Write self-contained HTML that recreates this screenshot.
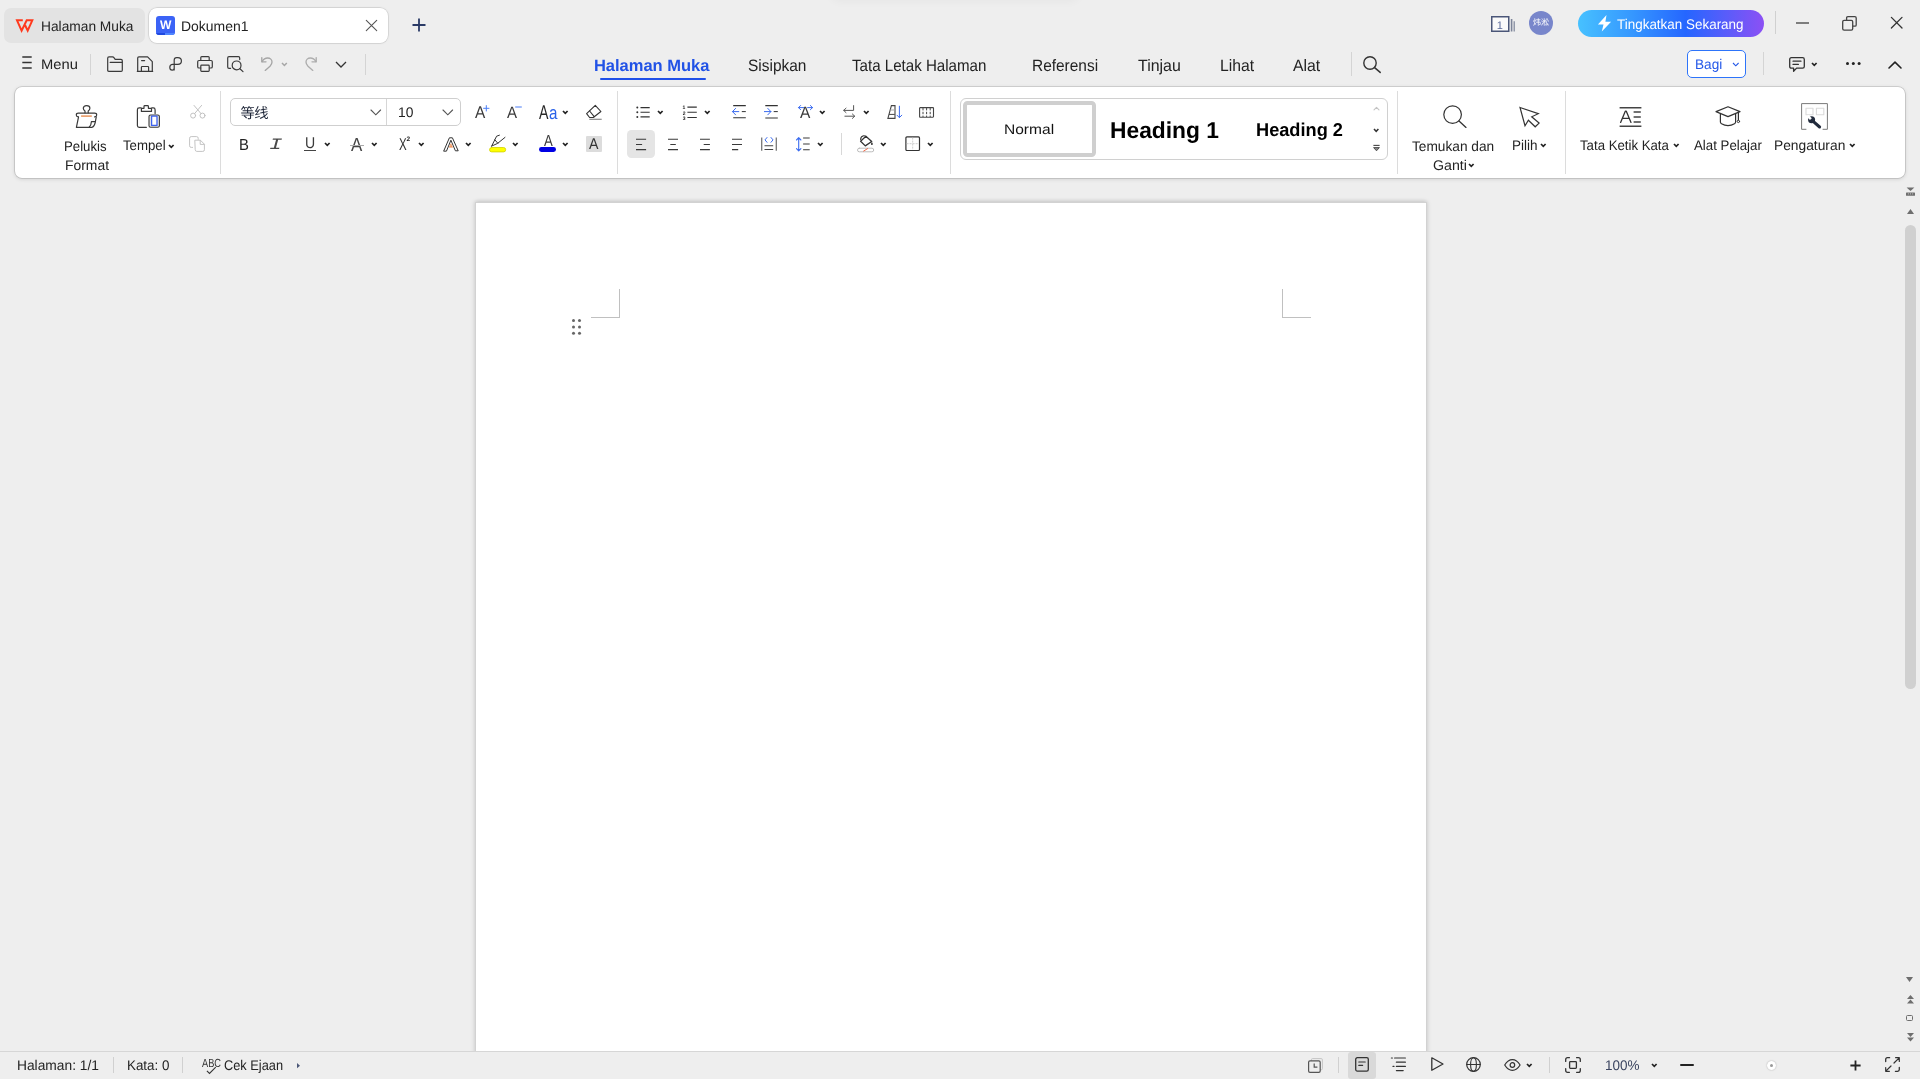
<!DOCTYPE html>
<html lang="id"><head><meta charset="utf-8"><title>Dokumen1 - WPS Writer</title>
<style>
*{box-sizing:border-box}
html,body{margin:0;padding:0}
body{text-rendering:geometricPrecision;width:1920px;height:1079px;background:#eeeeee;position:relative;overflow:hidden;font-family:"Liberation Sans","Noto Sans CJK SC",sans-serif;color:#222}
.a{position:absolute}
.t{position:absolute;white-space:nowrap;line-height:1}
svg{overflow:visible}
</style></head><body><div id="root" style="position:absolute;left:0;top:0;width:1920px;height:1079px;will-change:transform">
<div class="a" style="left:832px;top:-16px;width:246px;height:16px;border-radius:8px;box-shadow:0 0 8px 2px rgba(0,0,0,.035)"></div>
<div class="a" style="left:4px;top:8px;width:140.5px;height:34.6px;background:#e3e3e3;border-radius:7px;"></div>
<svg class="a" style="left:15px;top:19px;" width="19" height="14" viewBox="0 0 19 14" fill="none" stroke-linecap="round" stroke-linejoin="round"><path d="M7.8 1.3H2L6.6 11.7L11.7 1.3H17.3L12.7 11.7L10.1 6.2" stroke="#ff3a1e" stroke-width="2" stroke-linejoin="miter" stroke-linecap="butt"/></svg>
<span class="t" style="left:40.78px;top:19px;font-size:14px;color:#222;transform:scaleX(0.9826);transform-origin:0 0;">Halaman Muka</span>
<div class="a" style="left:148.8px;top:7.6px;width:239.39999999999998px;height:35.6px;background:#fff;border-radius:8px;box-shadow:0 0 0 0.7px rgba(0,0,0,.11),0 0 3px rgba(0,0,0,.08);"></div>
<div class="a" style="left:156px;top:16px;width:19px;height:19px;border-radius:3px;background:#3b63f6;overflow:hidden"><div class="a" style="left:0;bottom:0;width:9px;height:2px;background:#1f49e0"></div><div class="a" style="left:9px;bottom:0;width:10px;height:2px;background:#4f86ff"></div></div>
<span class="t" style="left:159.80px;top:19px;font-size:12.5px;color:#fff;transform:scaleX(0.9664);transform-origin:0 0;font-weight:bold;">W</span>
<span class="t" style="left:181.16px;top:19px;font-size:14px;color:#222;transform:scaleX(0.9971);transform-origin:0 0;">Dokumen1</span>
<svg class="a" style="left:366px;top:20px;" width="11" height="11" viewBox="0 0 11 11" fill="none" stroke-linecap="round" stroke-linejoin="round"><path d="M0.3 0.3L10.7 10.7M10.7 0.3L0.3 10.7" stroke="#555" stroke-width="1.1"/></svg>
<svg class="a" style="left:412px;top:18px;" width="14" height="14" viewBox="0 0 14 14" fill="none" stroke-linecap="round" stroke-linejoin="round"><path d="M7 0.5V13.5M0.5 7H13.5" stroke="#2a3a66" stroke-width="1.8" stroke-linecap="butt"/></svg>
<svg class="a" style="left:1491px;top:16px;" width="24" height="16" viewBox="0 0 24 16" fill="none" stroke-linecap="round" stroke-linejoin="round"><rect x="0.75" y="0.75" width="17" height="14.5" stroke="#4a5678" stroke-width="1.5" fill="#fafafa" stroke-linejoin="miter"/><path d="M20.6 3V15.5" stroke="#7c8499" stroke-width="1.6" stroke-linecap="butt"/><path d="M23.2 5.2V15.5" stroke="#7c8499" stroke-width="1.2" stroke-linecap="butt"/></svg>
<span class="t" style="left:1496.77px;top:21px;font-size:11px;color:#5a6a9a;">1</span>
<div class="a" style="left:1529px;top:11px;width:24px;height:24px;border-radius:12px;background:#7886cb"></div>
<span class="t" style="left:1533px;top:18.5px;font-size:8px;color:#fff;letter-spacing:0">炜淞</span>
<div class="a" style="left:1578px;top:10px;width:186px;height:27px;border-radius:14px;background:linear-gradient(90deg,#47c1ff 0%,#3596ff 30%,#2566ff 58%,#5a5cfa 80%,#8c50f4 100%)"></div>
<svg class="a" style="left:1597px;top:14px;" width="15" height="18" viewBox="0 0 15 18" fill="none" stroke-linecap="round" stroke-linejoin="round"><path d="M9.5 0.9L0.9 10.6H6.5L4.8 17.6L14.1 7.7H8.4Z" fill="#fff" stroke="none"/></svg>
<span class="t" style="left:1616.70px;top:17px;font-size:14px;color:#fff;transform:scaleX(0.9603);transform-origin:0 0;">Tingkatkan Sekarang</span>
<div class="a" style="left:1775px;top:11px;width:1px;height:23px;background:#d0d0d0;"></div>
<svg class="a" style="left:1796px;top:22px;" width="13" height="2" viewBox="0 0 13 2" fill="none" stroke-linecap="round" stroke-linejoin="round"><path d="M0 1H13" stroke="#333" stroke-width="1.2" stroke-linecap="butt"/></svg>
<svg class="a" style="left:1842px;top:16.4px;" width="15" height="15" viewBox="0 0 15 15" fill="none" stroke-linecap="round" stroke-linejoin="round"><rect x="0.7" y="4.4" width="10" height="9.8" rx="1.4" stroke="#444" stroke-width="1.3"/><path d="M4.6 4.2V1.9Q4.6 0.6 5.9 0.6H12.9Q14.2 0.6 14.2 1.9V8.9Q14.2 10.2 12.9 10.2H11" stroke="#444" stroke-width="1.3"/></svg>
<svg class="a" style="left:1890.6px;top:17.4px;" width="12" height="12" viewBox="0 0 12 12" fill="none" stroke-linecap="round" stroke-linejoin="round"><path d="M0.4 0.4L11 11M11 0.4L0.4 11" stroke="#333" stroke-width="1.3"/></svg>
<svg class="a" style="left:22.2px;top:56.1px;" width="10" height="13" viewBox="0 0 10 13" fill="none" stroke-linecap="round" stroke-linejoin="round"><path d="M0.3 1H9.7M0.3 6.5H9.7M0.3 12H9.7" stroke="#333" stroke-width="1.3" stroke-linecap="butt"/></svg>
<span class="t" style="left:40.70px;top:57px;font-size:14px;color:#222;transform:scaleX(1.0530);transform-origin:0 0;">Menu</span>
<div class="a" style="left:90px;top:54px;width:1px;height:21px;background:#d4d4d4;"></div>
<svg class="a" style="left:107px;top:56px;" width="16" height="16" viewBox="0 0 16 16" fill="none" stroke-linecap="round" stroke-linejoin="round"><path d="M0.7 14.2V2.2Q0.7 0.9 2 0.9H5.6Q6.4 0.9 6.9 1.6L8.2 3.4H14Q15.3 3.4 15.3 4.7V14.2Q15.3 15.3 14.2 15.3H1.8Q0.7 15.3 0.7 14.2Z" stroke="#3a3a3a" stroke-width="1.2"/><path d="M3.2 6.4H15" stroke="#3a3a3a" stroke-width="1.2"/></svg>
<svg class="a" style="left:137px;top:56px;" width="16" height="16" viewBox="0 0 16 16" fill="none" stroke-linecap="round" stroke-linejoin="round"><path d="M0.7 15.3V2Q0.7 0.8 1.9 0.8H10.6L15.3 5.6V15.3" stroke="#3a3a3a" stroke-width="1.2"/><path d="M4.4 15.3V11.3Q4.4 10.5 5.2 10.5H10.8Q11.6 10.5 11.6 11.3V15.3" stroke="#3a3a3a" stroke-width="1.2"/><path d="M0.3 15.3H15.7" stroke="#3a3a3a" stroke-width="1.2"/><path d="M4.6 4.6H7.6" stroke="#3a3a3a" stroke-width="1.2"/></svg>
<svg class="a" style="left:169px;top:57px;" width="13" height="14" viewBox="0 0 13 14" fill="none" stroke-linecap="round" stroke-linejoin="round"><path d="M5.2 13V3Q5.2 0.6 7.6 0.6H8.8C10.9 0.6 12.4 2.1 12.4 4C12.4 5.9 10.9 7.4 8.8 7.4H3.6C2 7.4 0.8 8.7 0.8 10.3C0.8 11.9 1.9 13.2 3.2 13.2C4.4 13.2 5.2 12.4 5.2 11" stroke="#3a3a3a" stroke-width="1.2"/></svg>
<svg class="a" style="left:197px;top:56px;" width="16" height="16" viewBox="0 0 16 16" fill="none" stroke-linecap="round" stroke-linejoin="round"><path d="M3.8 4.4V1.6Q3.8 0.7 4.7 0.7H11.3Q12.2 0.7 12.2 1.6V4.4" stroke="#3a3a3a" stroke-width="1.2"/><path d="M3.6 12H2Q0.7 12 0.7 10.7V5.8Q0.7 4.5 2 4.5H14Q15.3 4.5 15.3 5.8V10.7Q15.3 12 14 12H12.6" stroke="#3a3a3a" stroke-width="1.2"/><rect x="3.8" y="9.2" width="8.4" height="6.2" rx="0.8" stroke="#3a3a3a" stroke-width="1.2"/></svg>
<svg class="a" style="left:227px;top:56px;" width="17" height="16" viewBox="0 0 17 16" fill="none" stroke-linecap="round" stroke-linejoin="round"><path d="M3.6 12.3H2Q0.7 12.3 0.7 11V2Q0.7 0.7 2 0.7H11.4Q12.7 0.7 12.7 2V3.6" stroke="#3a3a3a" stroke-width="1.2"/><circle cx="9.6" cy="9.4" r="4.4" stroke="#3a3a3a" stroke-width="1.2"/><path d="M12.9 12.7L16 15.6" stroke="#3a3a3a" stroke-width="1.2"/></svg>
<svg class="a" style="left:261px;top:57px;" width="12" height="14" viewBox="0 0 12 14" fill="none" stroke-linecap="round" stroke-linejoin="round"><path d="M0.8 0.6V4.8H5" stroke="#a6a6a6" stroke-width="1.35"/><path d="M1 4.6C2.4 2.3 4.4 1 6.6 1C9.2 1 11 2.8 11 5C11 6.6 10.3 7.8 9 9.2L4.2 13.4" stroke="#a6a6a6" stroke-width="1.35"/></svg>
<svg class="a" style="left:280.00px;top:60.55px" width="8.8" height="6.5" viewBox="-2 -2 8.8 6.5" fill="none"><path d="M0 0L2.4 2.5L4.8 0" stroke="#a6a6a6" stroke-width="1.5" stroke-linecap="butt" stroke-linejoin="miter"/></svg>
<svg class="a" style="left:304.8px;top:57px;" width="12" height="14" viewBox="0 0 12 14" fill="none" stroke-linecap="round" stroke-linejoin="round"><path d="M11.2 0.6V4.8H7" stroke="#adadad" stroke-width="1.35"/><path d="M11 4.6C9.6 2.3 7.6 1 5.4 1C2.8 1 1 2.8 1 5C1 6.6 1.7 7.8 3 9.2L7.8 13.4" stroke="#adadad" stroke-width="1.35"/></svg>
<svg class="a" style="left:334.20px;top:60.10px" width="14" height="9" viewBox="-2 -2 14 9" fill="none"><path d="M0 0L5.0 5L10 0" stroke="#333" stroke-width="1.3" stroke-linecap="butt" stroke-linejoin="miter"/></svg>
<div class="a" style="left:365px;top:54px;width:1px;height:21px;background:#d4d4d4;"></div>
<span class="t" style="left:593.91px;top:58px;font-size:16.5px;color:#2152e6;font-weight:bold;">Halaman Muka</span>
<div class="a" style="left:600px;top:78px;width:106px;height:2px;background:#1f4fe8;border-radius:1px;"></div>
<span class="t" style="left:748.21px;top:58px;font-size:16.5px;color:#222;transform:scaleX(0.9362);transform-origin:0 0;">Sisipkan</span>
<span class="t" style="left:852.17px;top:58px;font-size:16.5px;color:#222;transform:scaleX(0.9159);transform-origin:0 0;">Tata Letak Halaman</span>
<span class="t" style="left:1031.54px;top:58px;font-size:16.5px;color:#222;transform:scaleX(0.9359);transform-origin:0 0;">Referensi</span>
<span class="t" style="left:1137.65px;top:58px;font-size:16.5px;color:#222;transform:scaleX(0.9652);transform-origin:0 0;">Tinjau</span>
<span class="t" style="left:1220.02px;top:58px;font-size:16.5px;color:#222;transform:scaleX(0.9526);transform-origin:0 0;">Lihat</span>
<span class="t" style="left:1292.97px;top:58px;font-size:16.5px;color:#222;transform:scaleX(0.9547);transform-origin:0 0;">Alat</span>
<div class="a" style="left:1351px;top:52px;width:1px;height:24px;background:#d4d4d4;"></div>
<svg class="a" style="left:1363px;top:55.6px;" width="18" height="17" viewBox="0 0 18 17" fill="none" stroke-linecap="round" stroke-linejoin="round"><circle cx="7" cy="7" r="6.2" stroke="#333" stroke-width="1.4"/><path d="M11.6 11.6L17.2 16.4" stroke="#333" stroke-width="1.5"/></svg>
<div class="a" style="left:1687px;top:50px;width:59px;height:28px;border:1px solid #2d74fa;border-radius:5px;background:#fff"></div>
<span class="t" style="left:1694.69px;top:57px;font-size:14px;color:#2458e8;transform:scaleX(0.9716);transform-origin:0 0;">Bagi</span>
<svg class="a" style="left:1730.60px;top:60.80px" width="9.6" height="6.8" viewBox="-2 -2 9.6 6.8" fill="none"><path d="M0 0L2.8 2.8L5.6 0" stroke="#2458e8" stroke-width="1.1" stroke-linecap="butt" stroke-linejoin="miter"/></svg>
<div class="a" style="left:1763px;top:52px;width:1px;height:23px;background:#d4d4d4;"></div>
<svg class="a" style="left:1789px;top:57px;" width="16" height="15" viewBox="0 0 16 15" fill="none" stroke-linecap="round" stroke-linejoin="round"><path d="M2.4 0.7H13.6Q15.3 0.7 15.3 2.4V9.4Q15.3 11.1 13.6 11.1H7.6L4.6 14.3V11.1H2.4Q0.7 11.1 0.7 9.4V2.4Q0.7 0.7 2.4 0.7Z" stroke="#333" stroke-width="1.3"/><path d="M4 4.2H12M4 7.4H9.4" stroke="#333" stroke-width="1.2"/></svg>
<svg class="a" style="left:1810.30px;top:61.05px" width="8.6" height="6.3" viewBox="-2 -2 8.6 6.3" fill="none"><path d="M0 0L2.3 2.3L4.6 0" stroke="#222" stroke-width="1.7" stroke-linecap="butt" stroke-linejoin="miter"/></svg>
<div class="a" style="left:1845.6px;top:62.4px;width:3px;height:3px;border-radius:2px;background:#222;box-shadow:5.8px 0 0 #222,11.6px 0 0 #222"></div>
<svg class="a" style="left:1888px;top:60.5px;" width="14" height="8" viewBox="0 0 14 8" fill="none" stroke-linecap="round" stroke-linejoin="round"><path d="M1 7L7 1.1L13 7" stroke="#222" stroke-width="1.6"/></svg>
<div class="a" style="left:15px;top:87px;width:1890px;height:91px;background:#fff;border-radius:7px;box-shadow:0 0 0 0.8px rgba(0,0,0,.15),0 1px 4px rgba(0,0,0,.15)"></div>
<svg class="a" style="left:75px;top:105px;" width="23" height="23" viewBox="0 0 23 23" fill="none" stroke-linecap="round" stroke-linejoin="round"><path d="M10 7.8V6Q8.3 5 8.3 3.3Q8.3 0.7 11.6 0.7Q14.9 0.7 14.9 3.3Q14.9 5 13.2 6V7.8" stroke="#3a3a3a" stroke-width="1.2"/><path d="M3.4 11.9Q1.3 11.7 1.3 10Q1.3 8.2 3.4 8.2H19.6Q21.7 8.2 21.7 10Q21.7 11.7 19.6 11.9" stroke="#3a3a3a" stroke-width="1.2"/><path d="M6.1 11.1H16.8" stroke="#e8935a" stroke-width="1.5" stroke-linecap="butt"/><path d="M3.5 12.1L1.4 22.3H17.2Q19.4 21.4 20.2 17.6L21.2 12.1" stroke="#3a3a3a" stroke-width="1.2"/><path d="M14.3 22Q16.2 20 16.4 16.7H20" stroke="#3a3a3a" stroke-width="1.2"/></svg>
<span class="t" style="left:63.72px;top:139px;font-size:14px;color:#222;transform:scaleX(0.9429);transform-origin:0 0;">Pelukis</span>
<span class="t" style="left:64.67px;top:158px;font-size:14px;color:#222;transform:scaleX(0.9928);transform-origin:0 0;">Format</span>
<svg class="a" style="left:136px;top:105px;" width="24" height="23" viewBox="0 0 24 23" fill="none" stroke-linecap="round" stroke-linejoin="round"><path d="M5.2 2.9H3.2Q1.4 2.9 1.4 4.7V20.5Q1.4 22.3 3.2 22.3H10.4" stroke="#3a3a3a" stroke-width="1.2"/><path d="M15.7 2.9H17.3Q19.1 2.9 19.1 4.7V8.6" stroke="#3a3a3a" stroke-width="1.2"/><path d="M5.4 6.4V4Q5.4 3.3 6.1 3.3H8V1.4Q8 0.6 8.8 0.6H11.6Q12.4 0.6 12.4 1.4V3.3H14.8Q15.5 3.3 15.5 4V6.4Z" stroke="#3a3a3a" stroke-width="1.2"/><rect x="13" y="10" width="10.4" height="12.3" rx="1.6" fill="#e6e6e6" stroke="#3a3a3a" stroke-width="1.1"/><rect x="15.6" y="11.2" width="5.4" height="9.2" fill="#fff" stroke="#3e63f0" stroke-width="1.3"/></svg>
<span class="t" style="left:122.50px;top:138px;font-size:14px;color:#222;transform:scaleX(0.9455);transform-origin:0 0;">Tempel</span>
<svg class="a" style="left:167.40px;top:142.55px" width="8.6" height="6.3" viewBox="-2 -2 8.6 6.3" fill="none"><path d="M0 0L2.3 2.3L4.6 0" stroke="#222" stroke-width="1.7" stroke-linecap="butt" stroke-linejoin="miter"/></svg>
<svg class="a" style="left:189.5px;top:105px;" width="16" height="14" viewBox="0 0 16 14" fill="none" stroke-linecap="round" stroke-linejoin="round"><circle cx="3.1" cy="10.6" r="2.5" stroke="#c2c2c2" stroke-width="1"/><circle cx="12.5" cy="10.6" r="2.5" stroke="#c2c2c2" stroke-width="1"/><path d="M4.6 8.6L11.6 0.4M11 8.6L4 0.4" stroke="#c2c2c2" stroke-width="1"/></svg>
<svg class="a" style="left:189px;top:136px;" width="16" height="16" viewBox="0 0 16 16" fill="none" stroke-linecap="round" stroke-linejoin="round"><path d="M3.6 11.4H2.2Q0.6 11.4 0.6 9.8V2.2Q0.6 0.6 2.2 0.6H7.6Q9.2 0.6 9.2 2.2V3.4" stroke="#c4c4c4" stroke-width="1"/><path d="M6.2 4.2H11.4L15.4 8.2V13.8Q15.4 15.4 13.8 15.4H7.8Q6.2 15.4 6.2 13.8Z" stroke="#c4c4c4" stroke-width="1" fill="#fff"/><path d="M11.2 4.4V8.4H15.2" stroke="#c4c4c4" stroke-width="1"/></svg>
<div class="a" style="left:220px;top:91px;width:1px;height:83px;background:#dcdcdc;"></div>
<div class="a" style="left:230px;top:98px;width:231px;height:28px;border:1px solid #cfcfcf;border-radius:5px;background:#fff"></div>
<div class="a" style="left:386px;top:99px;width:1px;height:26px;background:#d6d6d6;"></div>
<span class="t" style="left:240.6px;top:106px;font-size:14.3px;color:#1e2638;letter-spacing:-0.6px;font-family:'Noto Sans CJK SC',sans-serif">等线</span>
<svg class="a" style="left:368.80px;top:108.00px" width="13.6" height="8.8" viewBox="-2 -2 13.6 8.8" fill="none"><path d="M0 0L4.8 4.8L9.6 0" stroke="#555" stroke-width="1.1" stroke-linecap="round" stroke-linejoin="miter"/></svg>
<span class="t" style="left:398.45px;top:105px;font-size:14px;color:#222;transform:scaleX(0.9879);transform-origin:0 0;">10</span>
<svg class="a" style="left:441.40px;top:108.00px" width="13.6" height="8.8" viewBox="-2 -2 13.6 8.8" fill="none"><path d="M0 0L4.8 4.8L9.6 0" stroke="#555" stroke-width="1.1" stroke-linecap="round" stroke-linejoin="miter"/></svg>
<span class="t" style="left:474.97px;top:104px;font-size:17px;color:#3a3a3a;transform:scaleX(0.9042);transform-origin:0 0;">A</span>
<svg class="a" style="left:483px;top:104.6px;" width="6.6" height="6.6" viewBox="0 0 6.6 6.6" fill="none" stroke-linecap="round" stroke-linejoin="round"><path d="M3.3 0.2V6.4M0.2 3.3H6.4" stroke="#4a7df5" stroke-width="1" stroke-linecap="butt"/></svg>
<span class="t" style="left:506.97px;top:105px;font-size:16.5px;color:#3a3a3a;transform:scaleX(0.9130);transform-origin:0 0;">A</span>
<svg class="a" style="left:515px;top:105.6px;" width="7" height="2" viewBox="0 0 7 2" fill="none" stroke-linecap="round" stroke-linejoin="round"><path d="M0.2 1H6.8" stroke="#4a7df5" stroke-width="1" stroke-linecap="butt"/></svg>
<span class="t" style="left:538.98px;top:103px;font-size:20px;color:#2a2a2a;transform:scaleX(0.7078);transform-origin:0 0;">A</span>
<span class="t" style="left:548.56px;top:104px;font-size:18.5px;color:#2a62e8;transform:scaleX(0.8197);transform-origin:0 0;">a</span>
<svg class="a" style="left:561.10px;top:108.75px" width="8.6" height="6.3" viewBox="-2 -2 8.6 6.3" fill="none"><path d="M0 0L2.3 2.3L4.6 0" stroke="#222" stroke-width="1.7" stroke-linecap="butt" stroke-linejoin="miter"/></svg>
<svg class="a" style="left:586px;top:105px;" width="17" height="15" viewBox="0 0 17 15" fill="none" stroke-linecap="round" stroke-linejoin="round"><path d="M9.3 0.4L14.9 6.5L7.3 12.5H3.6L0.6 8.7Z" stroke="#333" stroke-width="1.1"/><path d="M3.6 6L8.2 11.6" stroke="#333" stroke-width="1.1"/><path d="M3.3 14.3H15.7" stroke="#8a8a8a" stroke-width="1.2" stroke-linecap="butt"/></svg>
<span class="t" style="left:238.78px;top:138px;font-size:16px;color:#222;transform:scaleX(0.9277);transform-origin:0 0;">B</span>
<span class="t" style="left:268.8px;top:137px;font-size:16px;color:#4a4a4a;font-style:italic;font-family:'Liberation Mono',monospace;transform:scaleX(1.4);transform-origin:0 0">I</span>
<span class="t" style="left:304.92px;top:136px;font-size:15.5px;color:#3a3a3a;transform:scaleX(0.9078);transform-origin:0 0;">U</span>
<div class="a" style="left:304px;top:149.8px;width:12px;height:1.1999999999999886px;background:#444;"></div>
<svg class="a" style="left:323.20px;top:140.85px" width="8.6" height="6.3" viewBox="-2 -2 8.6 6.3" fill="none"><path d="M0 0L2.3 2.3L4.6 0" stroke="#222" stroke-width="1.7" stroke-linecap="butt" stroke-linejoin="miter"/></svg>
<span class="t" style="left:351.37px;top:136px;font-size:19px;color:#444;transform:scaleX(0.8882);transform-origin:0 0;">A</span>
<div class="a" style="left:350px;top:144.5px;width:13.800000000000011px;height:1.4000000000000057px;background:#aaa;"></div>
<svg class="a" style="left:370.10px;top:140.85px" width="8.6" height="6.3" viewBox="-2 -2 8.6 6.3" fill="none"><path d="M0 0L2.3 2.3L4.6 0" stroke="#222" stroke-width="1.7" stroke-linecap="butt" stroke-linejoin="miter"/></svg>
<span class="t" style="left:398.55px;top:136px;font-size:17px;color:#333;transform:scaleX(0.6786);transform-origin:0 0;">X</span>
<span class="t" style="left:406.38px;top:137px;font-size:6.5px;color:#222;font-weight:bold;">2</span>
<svg class="a" style="left:417.40px;top:140.85px" width="8.6" height="6.3" viewBox="-2 -2 8.6 6.3" fill="none"><path d="M0 0L2.3 2.3L4.6 0" stroke="#222" stroke-width="1.7" stroke-linecap="butt" stroke-linejoin="miter"/></svg>
<svg class="a" style="left:443px;top:137px;" width="16" height="15" viewBox="0 0 16 15" fill="none" stroke-linecap="round" stroke-linejoin="round"><path d="M0.8 13.8L6.4 0.8H9.4L15.2 13.8H12.4L7.9 3.2L3.6 13.8Z" stroke="#333" stroke-width="1"/><path d="M5.9 10.4L7.9 6.2L9.9 10.4Z" fill="#f0803c" stroke="none"/><path d="M7.1 8.9H8.7" stroke="#fff" stroke-width="0.7" stroke-linecap="butt"/></svg>
<svg class="a" style="left:464.10px;top:140.85px" width="8.6" height="6.3" viewBox="-2 -2 8.6 6.3" fill="none"><path d="M0 0L2.3 2.3L4.6 0" stroke="#222" stroke-width="1.7" stroke-linecap="butt" stroke-linejoin="miter"/></svg>
<svg class="a" style="left:489px;top:134px;" width="18" height="19" viewBox="0 0 18 19" fill="none" stroke-linecap="round" stroke-linejoin="round"><path d="M2.6 12.2L7.6 2.2L10.4 1.2" stroke="#333" stroke-width="1"/><path d="M2.8 12L8.6 9.4L16 3.4" stroke="#333" stroke-width="1"/><path d="M5.8 5.8L8.8 9.2" stroke="#333" stroke-width="1"/><rect x="0.5" y="13.5" width="16.2" height="4.4" rx="2.2" fill="#ffff00" stroke="#d2d200" stroke-width="0.8"/></svg>
<svg class="a" style="left:511.10px;top:140.85px" width="8.6" height="6.3" viewBox="-2 -2 8.6 6.3" fill="none"><path d="M0 0L2.3 2.3L4.6 0" stroke="#222" stroke-width="1.7" stroke-linecap="butt" stroke-linejoin="miter"/></svg>
<span class="t" style="left:543.67px;top:134px;font-size:16px;color:#3a3a3a;transform:scaleX(0.8200);transform-origin:0 0;">A</span>
<div class="a" style="left:538.9px;top:147.2px;width:17.200000000000045px;height:4.800000000000011px;background:#0000e4;border-radius:2.4px;"></div>
<svg class="a" style="left:561.10px;top:140.85px" width="8.6" height="6.3" viewBox="-2 -2 8.6 6.3" fill="none"><path d="M0 0L2.3 2.3L4.6 0" stroke="#222" stroke-width="1.7" stroke-linecap="butt" stroke-linejoin="miter"/></svg>
<div class="a" style="left:586.1px;top:136.1px;width:15.799999999999955px;height:15.700000000000017px;background:#dcdcdc;border-radius:1px;"></div>
<span class="t" style="left:589.29px;top:137px;font-size:15.5px;color:#333;transform:scaleX(0.9129);transform-origin:0 0;">A</span>
<div class="a" style="left:617px;top:91px;width:1px;height:83px;background:#dcdcdc;"></div>
<svg class="a" style="left:636px;top:105px;" width="15" height="14" viewBox="0 0 15 14" fill="none" stroke-linecap="round" stroke-linejoin="round"><circle cx="1.3" cy="2.6" r="1" fill="#333" stroke="none"/><circle cx="1.3" cy="7.3" r="1" fill="#333" stroke="none"/><circle cx="1.3" cy="11.9" r="1" fill="#333" stroke="none"/><path d="M4.5 2.6H13.7M4.5 7.3H13.7M4.5 11.9H13.7" stroke="#333" stroke-width="1.1" stroke-linecap="butt"/></svg>
<svg class="a" style="left:656.20px;top:108.85px" width="8.6" height="6.3" viewBox="-2 -2 8.6 6.3" fill="none"><path d="M0 0L2.3 2.3L4.6 0" stroke="#222" stroke-width="1.7" stroke-linecap="butt" stroke-linejoin="miter"/></svg>
<svg class="a" style="left:683px;top:105px;" width="15" height="14" viewBox="0 0 15 14" fill="none" stroke-linecap="round" stroke-linejoin="round"><path d="M4.4 2.1H13.8M4.4 7.3H13.8M4.4 12.5H13.8" stroke="#333" stroke-width="1.1" stroke-linecap="butt"/></svg>
<span class="t" style="left:682.49px;top:106px;font-size:5px;color:#222;font-weight:bold;">1</span>
<span class="t" style="left:682.63px;top:112px;font-size:5px;color:#222;font-weight:bold;">2</span>
<span class="t" style="left:682.69px;top:117px;font-size:5px;color:#222;font-weight:bold;">3</span>
<svg class="a" style="left:703.30px;top:108.85px" width="8.6" height="6.3" viewBox="-2 -2 8.6 6.3" fill="none"><path d="M0 0L2.3 2.3L4.6 0" stroke="#222" stroke-width="1.7" stroke-linecap="butt" stroke-linejoin="miter"/></svg>
<svg class="a" style="left:732px;top:105px;" width="14" height="14" viewBox="0 0 14 14" fill="none" stroke-linecap="round" stroke-linejoin="round"><path d="M1.2 0.6H13.8M1.2 12.8H13.8" stroke="#333" stroke-width="1.1" stroke-linecap="butt"/><path d="M0.6 6.6H6.8M3.6 3.4L0.5 6.6L3.6 9.8" stroke="#3b6cf0" stroke-width="1"/><path d="M9.8 6.6H13.8" stroke="#333" stroke-width="1" stroke-linecap="butt"/></svg>
<svg class="a" style="left:764px;top:105px;" width="14" height="14" viewBox="0 0 14 14" fill="none" stroke-linecap="round" stroke-linejoin="round"><path d="M1.3 0.6H13.8M1.3 13H13.8" stroke="#333" stroke-width="1.1" stroke-linecap="butt"/><path d="M0.4 6.6H6.8M3.8 3.4L6.9 6.6L3.8 9.8" stroke="#3b6cf0" stroke-width="1"/><path d="M9.7 6.6H13.8" stroke="#333" stroke-width="1" stroke-linecap="butt"/></svg>
<span class="t" style="left:799.87px;top:105px;font-size:16.5px;color:#3a3a3a;transform:scaleX(0.9404);transform-origin:0 0;">A</span>
<svg class="a" style="left:797.6px;top:104.6px;" width="15" height="5" viewBox="0 0 15 5" fill="none" stroke-linecap="round" stroke-linejoin="round"><path d="M0.5 2.6H5.6M2.6 0.5L0.5 2.6L2.6 4.7" stroke="#3b6cf0" stroke-width="1"/><path d="M14.5 2.6H9.6M12.4 0.5L14.5 2.6L12.4 4.7" stroke="#3b6cf0" stroke-width="1"/></svg>
<svg class="a" style="left:818.20px;top:108.85px" width="8.6" height="6.3" viewBox="-2 -2 8.6 6.3" fill="none"><path d="M0 0L2.3 2.3L4.6 0" stroke="#222" stroke-width="1.7" stroke-linecap="butt" stroke-linejoin="miter"/></svg>
<svg class="a" style="left:843px;top:105px;" width="13" height="14" viewBox="0 0 13 14" fill="none" stroke-linecap="round" stroke-linejoin="round"><path d="M10.6 0.6V5.4H0.8M3 3.2L0.7 5.4L3 7.6" stroke="#555" stroke-width="1"/><path d="M1.9 11.2H11.6M9.4 9L11.7 11.2L9.4 13.4" stroke="#555" stroke-width="1"/></svg>
<svg class="a" style="left:862.30px;top:108.85px" width="8.6" height="6.3" viewBox="-2 -2 8.6 6.3" fill="none"><path d="M0 0L2.3 2.3L4.6 0" stroke="#222" stroke-width="1.7" stroke-linecap="butt" stroke-linejoin="miter"/></svg>
<svg class="a" style="left:887px;top:105px;" width="16" height="14" viewBox="0 0 16 14" fill="none" stroke-linecap="round" stroke-linejoin="round"><path d="M4.4 0.6H8V13.4H0.9Z" stroke="#444" stroke-width="1.1" stroke-linejoin="miter"/><path d="M3.2 5H7.8" stroke="#aaa" stroke-width="1" stroke-linecap="butt"/><path d="M2 9.4H7.8" stroke="#444" stroke-width="1" stroke-linecap="butt"/><path d="M12.4 1.2V12.4M10 10.2L12.4 12.6L14.8 10.2" stroke="#3b6cf0" stroke-width="1"/></svg>
<svg class="a" style="left:919px;top:106.5px;" width="15" height="11" viewBox="0 0 15 11" fill="none" stroke-linecap="round" stroke-linejoin="round"><rect x="0.6" y="0.6" width="13.9" height="9.6" rx="0.6" stroke="#444" stroke-width="1.1"/><path d="M4 1V10M7.6 1V10M11.2 1V10" stroke="#444" stroke-width="1" stroke-dasharray="2.4 1.4" stroke-linecap="butt"/></svg>
<div class="a" style="left:627px;top:130px;width:28px;height:28px;background:#e5e5e5;border-radius:4.5px;"></div>
<svg class="a" style="left:636px;top:138px;" width="12" height="13" viewBox="0 0 12 13" fill="none" stroke-linecap="round" stroke-linejoin="round"><path d="M0 1.2H10.1M0 6.5H6.1M0 11.6H10.1" stroke="#3a3a3a" stroke-width="1.1" stroke-linecap="butt"/></svg>
<svg class="a" style="left:668px;top:138px;" width="12" height="13" viewBox="0 0 12 13" fill="none" stroke-linecap="round" stroke-linejoin="round"><path d="M0 1.2H10M2.3 6.5H7.8M0 11.6H10" stroke="#3a3a3a" stroke-width="1.1" stroke-linecap="butt"/></svg>
<svg class="a" style="left:700px;top:138px;" width="12" height="13" viewBox="0 0 12 13" fill="none" stroke-linecap="round" stroke-linejoin="round"><path d="M0 1.2H9.9M3.7 6.5H9.9M0 11.6H9.9" stroke="#3a3a3a" stroke-width="1.1" stroke-linecap="butt"/></svg>
<svg class="a" style="left:732px;top:138px;" width="12" height="13" viewBox="0 0 12 13" fill="none" stroke-linecap="round" stroke-linejoin="round"><path d="M0 1.2H10M0 6.5H10M0 11.6H6.2" stroke="#3a3a3a" stroke-width="1.1" stroke-linecap="butt"/></svg>
<svg class="a" style="left:761px;top:137px;" width="16" height="14" viewBox="0 0 16 14" fill="none" stroke-linecap="round" stroke-linejoin="round"><path d="M0.7 0.4V13.7M15.3 0.4V13.7" stroke="#777" stroke-width="1.3" stroke-linecap="butt"/><path d="M3.5 8.8H12.2M3.5 12.5H12.2" stroke="#444" stroke-width="1.1" stroke-linecap="butt"/><path d="M6 0.5L4 2.9L6 5.3M10 0.5L12 2.9L10 5.3" stroke="#3b6cf0" stroke-width="1"/></svg>
<svg class="a" style="left:796px;top:136.6px;" width="15" height="15" viewBox="0 0 15 15" fill="none" stroke-linecap="round" stroke-linejoin="round"><path d="M2.7 0.8V13.8M0.5 3L2.7 0.7L4.9 3M0.5 11.6L2.7 13.9L4.9 11.6" stroke="#3b6cf0" stroke-width="1.1"/><path d="M7.1 1H13.7M7.1 7H13.7M7.1 12.8H13.7" stroke="#3a3a3a" stroke-width="1.1" stroke-linecap="butt"/></svg>
<svg class="a" style="left:816.30px;top:140.85px" width="8.6" height="6.3" viewBox="-2 -2 8.6 6.3" fill="none"><path d="M0 0L2.3 2.3L4.6 0" stroke="#222" stroke-width="1.7" stroke-linecap="butt" stroke-linejoin="miter"/></svg>
<div class="a" style="left:841px;top:133px;width:1px;height:22px;background:#d8d8d8;"></div>
<svg class="a" style="left:857px;top:134px;" width="18" height="19" viewBox="0 0 18 19" fill="none" stroke-linecap="round" stroke-linejoin="round"><path d="M8.9 2.3L14.7 7.5L8.3 11.9L3.6 7.3Z" stroke="#333" stroke-width="1.3" stroke-linejoin="round"/><path d="M3.6 5.4Q3.8 2.2 6.6 1.8Q8.8 1.6 9.2 3.2" stroke="#333" stroke-width="1.1"/><path d="M14.9 7.9Q16.4 9.9 15.6 10.7Q14.9 11.3 14.2 10.7Q13.4 9.9 14.9 7.9Z" fill="#333" stroke="none"/><rect x="0.5" y="14.2" width="16.2" height="3.6" rx="1.8" stroke="#bdbdbd" stroke-width="1" fill="#fff"/><path d="M6.6 17.1L10.6 14.6" stroke="#f06a4a" stroke-width="1"/></svg>
<svg class="a" style="left:879.10px;top:140.85px" width="8.6" height="6.3" viewBox="-2 -2 8.6 6.3" fill="none"><path d="M0 0L2.3 2.3L4.6 0" stroke="#222" stroke-width="1.7" stroke-linecap="butt" stroke-linejoin="miter"/></svg>
<svg class="a" style="left:905px;top:136px;" width="15" height="15" viewBox="0 0 15 15" fill="none" stroke-linecap="round" stroke-linejoin="round"><rect x="0.9" y="0.9" width="13.6" height="13.6" rx="1" stroke="#333" stroke-width="1.2"/><path d="M7.7 1.6V13.8M1.6 7.7H13.8" stroke="#c8c8c8" stroke-width="0.9" stroke-dasharray="2 1" stroke-linecap="butt"/></svg>
<svg class="a" style="left:926.30px;top:140.85px" width="8.6" height="6.3" viewBox="-2 -2 8.6 6.3" fill="none"><path d="M0 0L2.3 2.3L4.6 0" stroke="#222" stroke-width="1.7" stroke-linecap="butt" stroke-linejoin="miter"/></svg>
<div class="a" style="left:950px;top:91px;width:1px;height:83px;background:#dcdcdc;"></div>
<div class="a" style="left:960px;top:98px;width:428px;height:62px;border:1px solid #d0d0d0;border-radius:6px;background:#fff"></div>
<div class="a" style="left:963px;top:101px;width:133px;height:56.4px;border:4px solid #cfcfcf;border-radius:4.5px;background:#fff"></div>
<span class="t" style="left:1004.33px;top:122px;font-size:14px;color:#111;transform:scaleX(1.1104);transform-origin:0 0;">Normal</span>
<span class="t" style="left:1110.08px;top:119px;font-size:23px;color:#000;transform:scaleX(0.9912);transform-origin:0 0;font-weight:bold;">Heading 1</span>
<span class="t" style="left:1255.79px;top:121px;font-size:18.5px;color:#000;transform:scaleX(0.9832);transform-origin:0 0;font-weight:bold;">Heading 2</span>
<svg class="a" style="left:1372px;top:105px" width="9" height="7" viewBox="0 0 9 7" fill="none"><path d="M2 4.8L4.5 2.3L7 4.8" stroke="#c4c4c4" stroke-width="1.1" stroke-linecap="round" stroke-linejoin="round"/></svg>
<svg class="a" style="left:1372.20px;top:126.65px" width="8.4" height="6.3" viewBox="-2 -2 8.4 6.3" fill="none"><path d="M0 0L2.2 2.3L4.4 0" stroke="#333" stroke-width="1.5" stroke-linecap="butt" stroke-linejoin="miter"/></svg>
<svg class="a" style="left:1372px;top:144px" width="9" height="9" viewBox="0 0 9 9" fill="none"><path d="M1.4 1.4H7.6" stroke="#444" stroke-width="1.1" stroke-linecap="butt"/><path d="M1.6 3.6H7.4L4.5 6.8Z" stroke="#444" stroke-width="0.9" stroke-linejoin="round" fill="#888"/></svg>
<div class="a" style="left:1397px;top:91px;width:1px;height:83px;background:#dcdcdc;"></div>
<svg class="a" style="left:1442.5px;top:105px;" width="24" height="23" viewBox="0 0 24 23" fill="none" stroke-linecap="round" stroke-linejoin="round"><circle cx="9.6" cy="9.6" r="8.8" stroke="#333" stroke-width="1.2"/><path d="M16 16L23 22.4" stroke="#333" stroke-width="1.3"/></svg>
<span class="t" style="left:1412.09px;top:139px;font-size:14px;color:#222;transform:scaleX(0.9777);transform-origin:0 0;">Temukan dan</span>
<span class="t" style="left:1432.89px;top:158px;font-size:14px;color:#222;transform:scaleX(1.0117);transform-origin:0 0;">Ganti</span>
<svg class="a" style="left:1467.10px;top:162.05px" width="8.6" height="6.3" viewBox="-2 -2 8.6 6.3" fill="none"><path d="M0 0L2.3 2.3L4.6 0" stroke="#222" stroke-width="1.7" stroke-linecap="butt" stroke-linejoin="miter"/></svg>
<svg class="a" style="left:1519px;top:105.6px;" width="22" height="21" viewBox="0 0 22 21" fill="none" stroke-linecap="round" stroke-linejoin="round"><path d="M1 1.5L19.3 7.7L12.7 10.8L20.1 17.1L16.2 20.8L9.4 14.3L6 19.7Z" stroke="#333" stroke-width="1.2" stroke-linejoin="miter"/></svg>
<span class="t" style="left:1511.50px;top:138px;font-size:14px;color:#222;transform:scaleX(0.9663);transform-origin:0 0;">Pilih</span>
<svg class="a" style="left:1539.20px;top:142.25px" width="8.6" height="6.3" viewBox="-2 -2 8.6 6.3" fill="none"><path d="M0 0L2.3 2.3L4.6 0" stroke="#222" stroke-width="1.7" stroke-linecap="butt" stroke-linejoin="miter"/></svg>
<div class="a" style="left:1565px;top:91px;width:1px;height:83px;background:#dcdcdc;"></div>
<svg class="a" style="left:1619px;top:107px;" width="23" height="20" viewBox="0 0 23 20" fill="none" stroke-linecap="round" stroke-linejoin="round"><path d="M0.6 0.8H22.4M0.6 19.2H22.4" stroke="#444" stroke-width="1.5" stroke-linecap="butt"/><path d="M1.6 15.4L6.3 4.2H7.3L12 15.4M3.4 11.4H10.2" stroke="#333" stroke-width="1.3"/><path d="M14.6 5H21.8M14.6 10H21.8M14.6 15H21.8" stroke="#444" stroke-width="1.3" stroke-linecap="butt"/></svg>
<span class="t" style="left:1580.31px;top:138px;font-size:14px;color:#222;transform:scaleX(0.9440);transform-origin:0 0;">Tata Ketik Kata</span>
<svg class="a" style="left:1672.20px;top:142.25px" width="8.6" height="6.3" viewBox="-2 -2 8.6 6.3" fill="none"><path d="M0 0L2.3 2.3L4.6 0" stroke="#222" stroke-width="1.7" stroke-linecap="butt" stroke-linejoin="miter"/></svg>
<svg class="a" style="left:1715px;top:105.6px;" width="26" height="22" viewBox="0 0 26 22" fill="none" stroke-linecap="round" stroke-linejoin="round"><path d="M13 0.8L25 5.6L13 10.6L1 5.6Z" stroke="#333" stroke-width="1.2"/><path d="M5.4 7.8V16Q5.4 17 6.6 17.8Q9.6 19.6 13 19.6Q16.4 19.6 19.4 17.8Q20.6 17 20.6 16V7.8" stroke="#333" stroke-width="1.2"/><path d="M23.4 6.6V14" stroke="#333" stroke-width="1.2"/><circle cx="23.4" cy="15.4" r="1.2" stroke="#333" stroke-width="1"/></svg>
<span class="t" style="left:1694.39px;top:138px;font-size:14px;color:#222;transform:scaleX(0.9473);transform-origin:0 0;">Alat Pelajar</span>
<svg class="a" style="left:1801px;top:103px;" width="27" height="27" viewBox="0 0 27 27" fill="none" stroke-linecap="round" stroke-linejoin="round"><path d="M5.4 26.3H0.6V0.6H26.4V26.3H21.6" stroke="#7a7a7a" stroke-width="1" stroke-linejoin="miter" stroke-linecap="butt"/><rect x="5" y="5.2" width="7" height="6.6" stroke="#dadada" stroke-width="1.1"/><rect x="15.4" y="5.2" width="7.4" height="6.6" stroke="#dadada" stroke-width="1.1"/><path d="M12.2 18.4L18.6 24" stroke="#222b3c" stroke-width="3" stroke-linecap="round"/><circle cx="10.6" cy="16.8" r="3.5" fill="#222b3c" stroke="none"/><path d="M9.9 16.1L6.4 12.6" stroke="#fff" stroke-width="2.6" stroke-linecap="butt"/></svg>
<span class="t" style="left:1773.98px;top:138px;font-size:14px;color:#222;transform:scaleX(0.9849);transform-origin:0 0;">Pengaturan</span>
<svg class="a" style="left:1847.50px;top:142.25px" width="8.6" height="6.3" viewBox="-2 -2 8.6 6.3" fill="none"><path d="M0 0L2.3 2.3L4.6 0" stroke="#222" stroke-width="1.7" stroke-linecap="butt" stroke-linejoin="miter"/></svg>
<div class="a" style="left:475px;top:202px;width:952px;height:860px;background:#fff;border:1px solid #d2d2d2;box-shadow:-1px -1px 4px rgba(0,0,0,.10),1px -1px 4px rgba(0,0,0,.10)"></div>
<div class="a" style="left:591px;top:317px;width:29px;height:1px;background:#c0c0c0;"></div>
<div class="a" style="left:619px;top:289px;width:1px;height:29px;background:#c0c0c0;"></div>
<div class="a" style="left:1282px;top:317px;width:29px;height:1px;background:#c0c0c0;"></div>
<div class="a" style="left:1282px;top:289px;width:1px;height:29px;background:#c0c0c0;"></div>
<div class="a" style="left:571.8px;top:318.7px;width:3px;height:3px;border-radius:2px;background:#666;box-shadow:6px 0 0 #666,0 6.4px 0 #666,6px 6.4px 0 #666,0 12.8px 0 #666,6px 12.8px 0 #666"></div>
<svg class="a" style="left:1906px;top:187.1px;" width="9" height="9" viewBox="0 0 9 9" fill="none" stroke-linecap="round" stroke-linejoin="round"><path d="M0.6 0.4H8.4L4.5 4Z" fill="#6e6e6e" stroke="none"/><rect x="0" y="5.6" width="9" height="3.2" rx="0.6" fill="#6e6e6e" stroke="none"/><path d="M2.4 6.4V7.4M4.5 6.4V7.4M6.6 6.4V7.4" stroke="#ddd" stroke-width="0.8" stroke-linecap="butt"/></svg>
<svg class="a" style="left:1907px;top:208.6px;" width="7" height="5" viewBox="0 0 7 5" fill="none" stroke-linecap="round" stroke-linejoin="round"><path d="M3.5 0L7 5H0Z" fill="#6e6e6e" stroke="none"/></svg>
<div class="a" style="left:1905px;top:225px;width:11px;height:464px;background:#d0d0d0;border-radius:5.5px;"></div>
<svg class="a" style="left:1906.4px;top:977px;" width="7" height="5" viewBox="0 0 7 5" fill="none" stroke-linecap="round" stroke-linejoin="round"><path d="M0 0H7L3.5 5Z" fill="#6e6e6e" stroke="none"/></svg>
<svg class="a" style="left:1906.6px;top:995px;" width="7" height="9" viewBox="0 0 7 9" fill="none" stroke-linecap="round" stroke-linejoin="round"><path d="M3.5 0L7 4H0Z" fill="#6e6e6e" stroke="none"/><path d="M3.5 4.4L7 8.4H0Z" fill="#6e6e6e" stroke="none"/></svg>
<div class="a" style="left:1906.4px;top:1014.7px;width:7px;height:6.8px;border:1.5px solid #6e6e6e;border-radius:1.5px"></div>
<svg class="a" style="left:1906.6px;top:1032.8px;" width="7" height="9" viewBox="0 0 7 9" fill="none" stroke-linecap="round" stroke-linejoin="round"><path d="M0 0H7L3.5 4Z" fill="#6e6e6e" stroke="none"/><path d="M0 4.4H7L3.5 8.4Z" fill="#6e6e6e" stroke="none"/></svg>
<div class="a" style="left:0px;top:1051px;width:1920px;height:28px;background:#eeeeee;"></div>
<div class="a" style="left:0px;top:1051px;width:1920px;height:1px;background:#d6d6d6;"></div>
<span class="t" style="left:17.28px;top:1058px;font-size:14px;color:#222;transform:scaleX(0.9846);transform-origin:0 0;">Halaman: 1/1</span>
<div class="a" style="left:113px;top:1057px;width:1px;height:16px;background:#d0d0d0;"></div>
<span class="t" style="left:126.71px;top:1058px;font-size:14px;color:#222;transform:scaleX(0.9558);transform-origin:0 0;">Kata: 0</span>
<div class="a" style="left:182px;top:1057px;width:1px;height:16px;background:#d0d0d0;"></div>
<span class="t" style="left:202.29px;top:1058px;font-size:11.8px;color:#333;transform:scaleX(0.7816);transform-origin:0 0;">ABC</span>
<svg class="a" style="left:206px;top:1066px;" width="11" height="8" viewBox="0 0 11 8" fill="none" stroke-linecap="round" stroke-linejoin="round"><path d="M0.9 4.9L3.5 7.4L9.75 1.2" stroke="#333" stroke-width="1.1" stroke-linecap="butt" stroke-linejoin="miter"/></svg>
<span class="t" style="left:224.16px;top:1058px;font-size:14px;color:#222;transform:scaleX(0.9143);transform-origin:0 0;">Cek Ejaan</span>
<svg class="a" style="left:297px;top:1062.8px;" width="3" height="6" viewBox="0 0 3 6" fill="none" stroke-linecap="round" stroke-linejoin="round"><path d="M0 0L3 2.65L0 5.3Z" fill="#4c5878" stroke="none"/></svg>
<svg class="a" style="left:1308px;top:1057.5px;" width="15" height="15" viewBox="0 0 15 15" fill="none" stroke-linecap="round" stroke-linejoin="round"><path d="M3.4 2.6V1.8Q3.4 0.6 4.6 0.6H13.2Q14.4 0.6 14.4 1.8V10.6Q14.4 11.8 13.2 11.8H12.6" stroke="#c4c4c4" stroke-width="1"/><rect x="0.6" y="2.8" width="11.6" height="11.6" rx="1.4" stroke="#555" stroke-width="1.2"/><path d="M6.2 5.4V9.2H9.4" stroke="#555" stroke-width="1.2" stroke-linecap="butt" stroke-linejoin="miter"/></svg>
<div class="a" style="left:1338px;top:1057px;width:1px;height:16px;background:#d0d0d0;"></div>
<div class="a" style="left:1348px;top:1052px;width:28px;height:27px;background:#d9d9d9;border-radius:3px;"></div>
<svg class="a" style="left:1355px;top:1057px;" width="14" height="15" viewBox="0 0 14 15" fill="none" stroke-linecap="round" stroke-linejoin="round"><rect x="0.7" y="0.7" width="12.6" height="13.4" rx="1.6" stroke="#333" stroke-width="1.3"/><path d="M3.8 5H10.2M3.8 8.4H7.6" stroke="#333" stroke-width="1.2"/></svg>
<svg class="a" style="left:1390.8px;top:1057.4px;" width="15" height="15" viewBox="0 0 15 15" fill="none" stroke-linecap="round" stroke-linejoin="round"><path d="M3.6 1H14.4M5.4 5.2H14.4M5.4 9.4H14.4M5.4 13.6H12.2" stroke="#333" stroke-width="1.2"/><path d="M0.4 1H1.4M2 9.4H3" stroke="#333" stroke-width="1.2"/></svg>
<svg class="a" style="left:1431px;top:1057.4px;" width="13" height="14" viewBox="0 0 13 14" fill="none" stroke-linecap="round" stroke-linejoin="round"><path d="M0.8 0.8L12 7L0.8 13.2Z" stroke="#333" stroke-width="1.3"/></svg>
<svg class="a" style="left:1465.8px;top:1057px;" width="15" height="15" viewBox="0 0 15 15" fill="none" stroke-linecap="round" stroke-linejoin="round"><circle cx="7.5" cy="7.5" r="6.8" stroke="#333" stroke-width="1.2"/><ellipse cx="7.5" cy="7.5" rx="2.9" ry="6.8" stroke="#333" stroke-width="1.1"/><path d="M0.8 7.5H14.2" stroke="#333" stroke-width="1.1"/></svg>
<svg class="a" style="left:1503.6px;top:1058.6px;" width="17" height="12" viewBox="0 0 17 12" fill="none" stroke-linecap="round" stroke-linejoin="round"><path d="M0.7 6Q4 0.7 8.4 0.7Q12.8 0.7 16.1 6Q12.8 11.3 8.4 11.3Q4 11.3 0.7 6Z" stroke="#333" stroke-width="1.2"/><circle cx="8.4" cy="6" r="2.3" stroke="#333" stroke-width="1.2"/></svg>
<svg class="a" style="left:1525.30px;top:1061.85px" width="8.6" height="6.3" viewBox="-2 -2 8.6 6.3" fill="none"><path d="M0 0L2.3 2.3L4.6 0" stroke="#222" stroke-width="1.7" stroke-linecap="butt" stroke-linejoin="miter"/></svg>
<div class="a" style="left:1549px;top:1057px;width:1px;height:16px;background:#d0d0d0;"></div>
<svg class="a" style="left:1565px;top:1056.5px;" width="16" height="16" viewBox="0 0 16 16" fill="none" stroke-linecap="round" stroke-linejoin="round"><path d="M0.7 4.4V2.6Q0.7 0.7 2.6 0.7H4.4M11.6 0.7H13.4Q15.3 0.7 15.3 2.6V4.4M15.3 11.6V13.4Q15.3 15.3 13.4 15.3H11.6M4.4 15.3H2.6Q0.7 15.3 0.7 13.4V11.6" stroke="#333" stroke-width="1.3"/><rect x="4.6" y="4.6" width="6.8" height="6.8" rx="0.8" stroke="#333" stroke-width="1.3"/></svg>
<span class="t" style="left:1604.58px;top:1058px;font-size:14px;color:#3b4560;transform:scaleX(0.9635);transform-origin:0 0;">100%</span>
<svg class="a" style="left:1650.10px;top:1062.05px" width="8.6" height="6.3" viewBox="-2 -2 8.6 6.3" fill="none"><path d="M0 0L2.3 2.3L4.6 0" stroke="#222" stroke-width="1.7" stroke-linecap="butt" stroke-linejoin="miter"/></svg>
<div class="a" style="left:1680.3px;top:1064px;width:13.400000000000091px;height:2px;background:#222;border-radius:1px;"></div>
<div class="a" style="left:1766.6px;top:1060.6px;width:9.6px;height:9.6px;border-radius:5px;background:#fff;box-shadow:0 0 1.5px rgba(0,0,0,.35)"></div>
<div class="a" style="left:1770.2px;top:1064.2px;width:2.4px;height:2.4px;border-radius:2px;background:#999"></div>
<svg class="a" style="left:1849.5px;top:1059.6px;" width="11" height="11" viewBox="0 0 11 11" fill="none" stroke-linecap="round" stroke-linejoin="round"><path d="M5.5 0.4V10.6M0.4 5.5H10.6" stroke="#222" stroke-width="1.8" stroke-linecap="butt"/></svg>
<svg class="a" style="left:1885px;top:1057px;" width="15" height="15" viewBox="0 0 15 15" fill="none" stroke-linecap="round" stroke-linejoin="round"><path d="M0.7 4.6V2.4Q0.7 0.7 2.4 0.7H4.6M14.3 10.4V12.6Q14.3 14.3 12.6 14.3H10.4" stroke="#333" stroke-width="1.3"/><path d="M9 6L14.2 0.8M10.6 0.7H14.3V4.4" stroke="#333" stroke-width="1.2"/><path d="M6 9L0.8 14.2M0.7 10.6V14.3H4.4" stroke="#333" stroke-width="1.2"/></svg>
</div></body></html>
